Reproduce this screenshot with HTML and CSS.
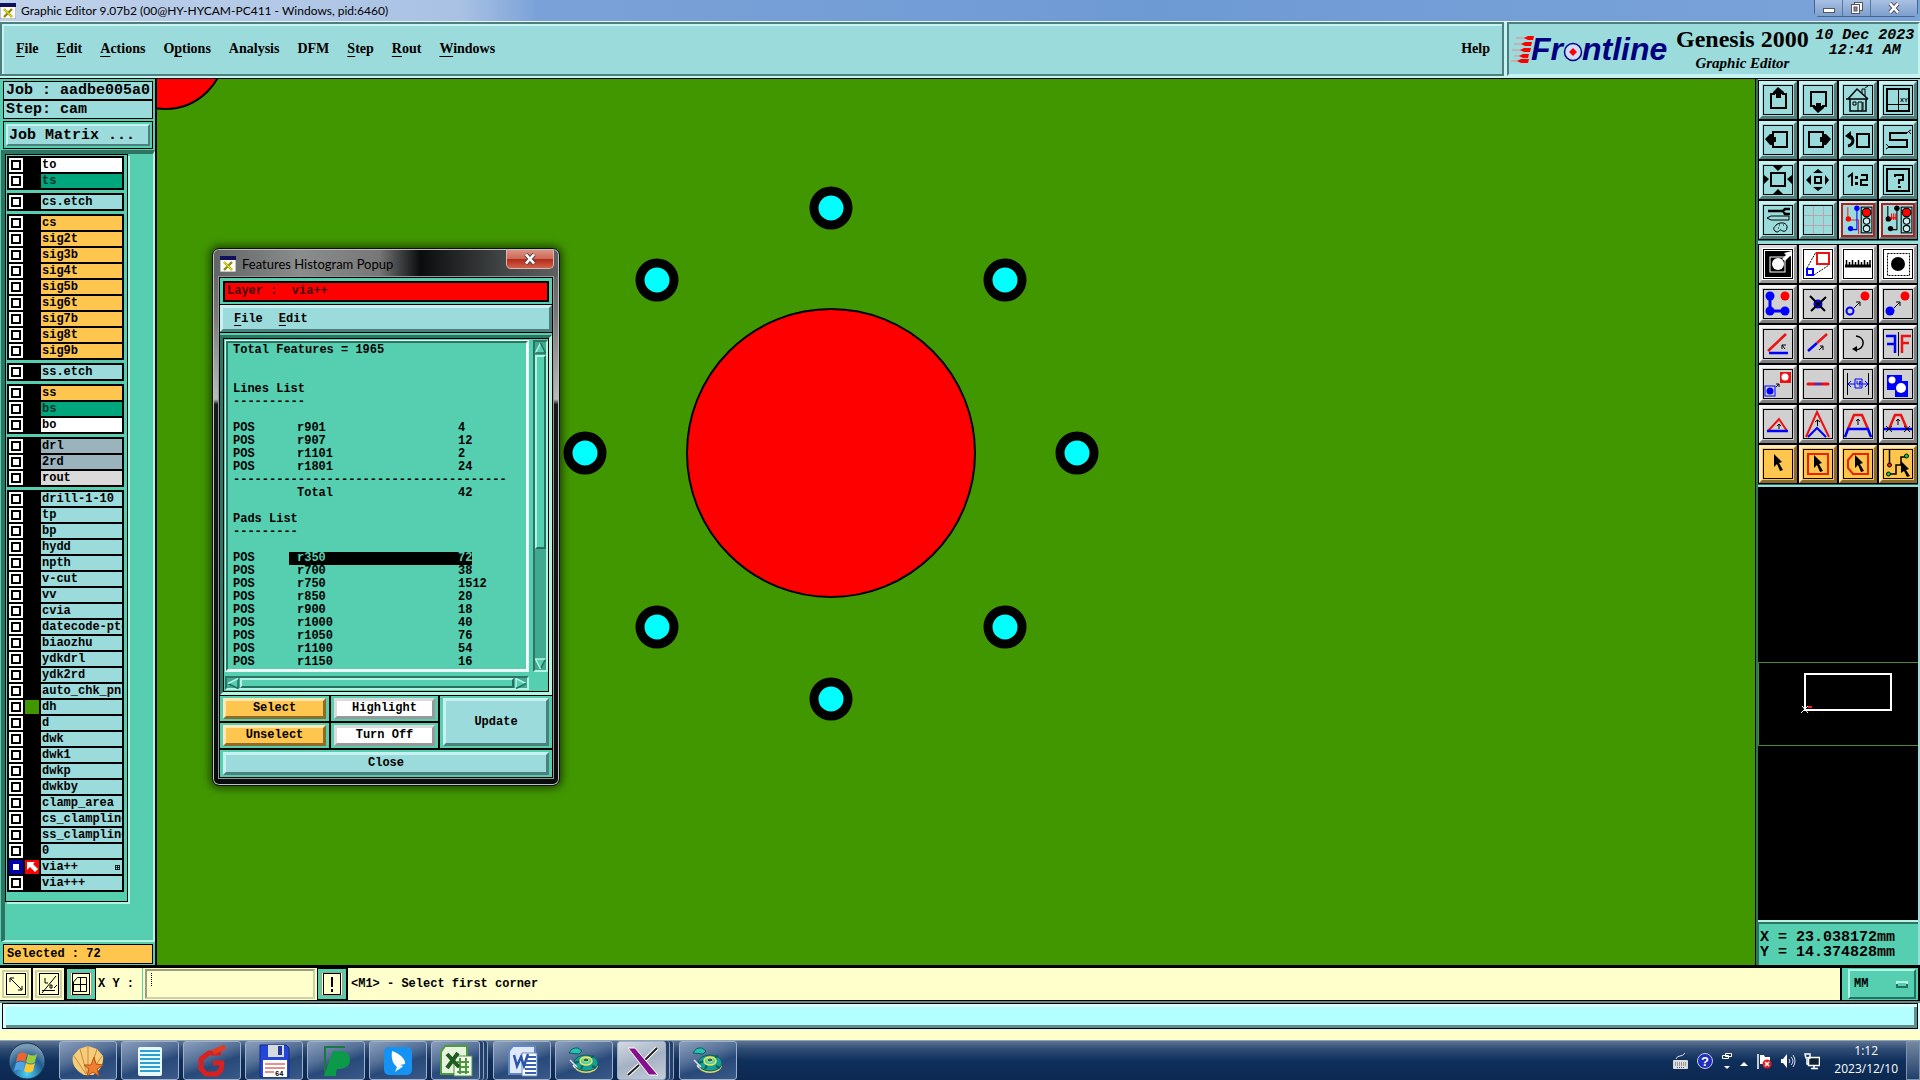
FILE: index.html
```html
<!DOCTYPE html>
<html lang="en">
<head>
  <meta charset="UTF-8" />
  <title>Graphic Editor 9.07b2</title>
  <link rel="stylesheet" href="styles.css">
</head>
<body>
  <header class="titlebar">
    <svg class="app-icon" viewBox="0 0 16 16"><rect width="16" height="16" fill="#fff" stroke="#888"/><rect width="16" height="4" fill="#10105c"/><path d="M4 6l8 8M12 6l-8 8" stroke="#8a8a10" stroke-width="2.4"/><path d="M4 6l8 8" stroke="#e8e020" stroke-width="1.2"/></svg>
    <h1>Graphic Editor 9.07b2 (00@HY-HYCAM-PC411 - Windows, pid:6460)</h1>
    <div class="window-buttons">
      <button aria-label="Minimize"><svg width="14" height="14"><rect x="1.500" y="7.500" width="11" height="4" fill="#fff" stroke="#556"/></svg></button>
      <button aria-label="Restore"><svg width="14" height="14"><rect x="4.500" y="1.500" width="8" height="8" fill="#fff" stroke="#556"/><rect x="1.500" y="3.500" width="8" height="9" fill="#fff" stroke="#556"/><rect x="4" y="6" width="3" height="4" fill="#88a" stroke="#556"/></svg></button>
      <button class="wide" aria-label="Close"><svg width="14" height="14"><path d="M3 2.500l8 9M11 2.500l-8 9" stroke="#556" stroke-width="4.500"/><path d="M3 2.500l8 9M11 2.500l-8 9" stroke="#fff" stroke-width="2.600"/></svg></button>
    </div>
  </header>

  <div class="topbar">
    <nav class="menubar">
      <a href="#"><u>F</u>ile</a>
      <a href="#"><u>E</u>dit</a>
      <a href="#"><u>A</u>ctions</a>
      <a href="#">O<u>p</u>tions</a>
      <a href="#">Analysis</a>
      <a href="#">DFM</a>
      <a href="#"><u>S</u>tep</a>
      <a href="#"><u>R</u>out</a>
      <a href="#"><u>W</u>indows</a>
      <a href="#" class="help">Help</a>
    </nav>
    <div class="brand">
      <svg class="logo" width="162" height="40" viewBox="0 -5 162 40">
        <path d="M5 4h18M3 10h17M1 16h16M3 22h14M0 27h17" stroke="#e88" stroke-width="1"/>
        <path d="M13 4l4-2h6l-1 4h-5zM10 10l4-2h7l-1 4h-6zM9 16l4-2h7l-1 4h-6zM8 22l4-2h6l-1 4h-5zM6 27l4-2h8l-1 4h-7z" fill="#f00"/>
        <text x="20" y="26" class="logo-text">Fr</text>
        <text x="71" y="26" class="logo-text">ntline</text>
        <circle cx="62" cy="18" r="8.500" fill="#cdf" stroke="#000080" stroke-width="1.500"/>
        <path d="M62 14l4 4-4 4-4-4z" fill="#f00"/>
      </svg>
      <div class="product">
        <strong>Genesis 2000</strong>
        <em>Graphic Editor</em>
      </div>
      <div class="date">10 Dec 2023<br>12:41 AM</div>
    </div>
  </div>

  <main class="workspace">
    <aside class="left-panel">
      <div class="job-box">Job : aadbe005a0</div>
      <div class="job-box">Step: cam</div>
      <div class="matrix-box"><button class="bevel">Job Matrix ...</button></div>
      <div class="layer-panel">
        <div class="layer-list">
          <div class="layer-group">
            <label class="white"><input type="checkbox"><i></i><span>to</span></label>
            <label class="mask"><input type="checkbox"><i></i><span>ts</span></label>
          </div>
          <div class="layer-group">
            <label><input type="checkbox"><i></i><span>cs.etch</span></label>
          </div>
          <div class="layer-group">
            <label class="signal"><input type="checkbox"><i></i><span>cs</span></label>
            <label class="signal"><input type="checkbox"><i></i><span>sig2t</span></label>
            <label class="signal"><input type="checkbox"><i></i><span>sig3b</span></label>
            <label class="signal"><input type="checkbox"><i></i><span>sig4t</span></label>
            <label class="signal"><input type="checkbox"><i></i><span>sig5b</span></label>
            <label class="signal"><input type="checkbox"><i></i><span>sig6t</span></label>
            <label class="signal"><input type="checkbox"><i></i><span>sig7b</span></label>
            <label class="signal"><input type="checkbox"><i></i><span>sig8t</span></label>
            <label class="signal"><input type="checkbox"><i></i><span>sig9b</span></label>
          </div>
          <div class="layer-group">
            <label><input type="checkbox"><i></i><span>ss.etch</span></label>
          </div>
          <div class="layer-group">
            <label class="signal"><input type="checkbox"><i></i><span>ss</span></label>
            <label class="mask"><input type="checkbox"><i></i><span>bs</span></label>
            <label class="white"><input type="checkbox"><i></i><span>bo</span></label>
          </div>
          <div class="layer-group">
            <label class="drill"><input type="checkbox"><i></i><span>drl</span></label>
            <label class="drill"><input type="checkbox"><i></i><span>2rd</span></label>
            <label class="rout"><input type="checkbox"><i></i><span>rout</span></label>
          </div>
          <div class="layer-group">
            <label><input type="checkbox"><i></i><span>drill-1-10</span></label>
            <label><input type="checkbox"><i></i><span>tp</span></label>
            <label><input type="checkbox"><i></i><span>bp</span></label>
            <label><input type="checkbox"><i></i><span>hydd</span></label>
            <label><input type="checkbox"><i></i><span>npth</span></label>
            <label><input type="checkbox"><i></i><span>v-cut</span></label>
            <label><input type="checkbox"><i></i><span>vv</span></label>
            <label><input type="checkbox"><i></i><span>cvia</span></label>
            <label><input type="checkbox"><i></i><span>datecode-pte</span></label>
            <label><input type="checkbox"><i></i><span>biaozhu</span></label>
            <label><input type="checkbox"><i></i><span>ydkdrl</span></label>
            <label><input type="checkbox"><i></i><span>ydk2rd</span></label>
            <label><input type="checkbox"><i></i><span>auto_chk_pnl</span></label>
            <label class="shown"><input type="checkbox"><i></i><span>dh</span></label>
            <label><input type="checkbox"><i></i><span>d</span></label>
            <label><input type="checkbox"><i></i><span>dwk</span></label>
            <label><input type="checkbox"><i></i><span>dwk1</span></label>
            <label><input type="checkbox"><i></i><span>dwkp</span></label>
            <label><input type="checkbox"><i></i><span>dwkby</span></label>
            <label><input type="checkbox"><i></i><span>clamp_area</span></label>
            <label><input type="checkbox"><i></i><span>cs_clampline</span></label>
            <label><input type="checkbox"><i></i><span>ss_clampline</span></label>
            <label><input type="checkbox"><i></i><span>0</span></label>
            <label class="work"><input type="checkbox" checked><i><svg viewBox="0 0 14 14"><path d="M2 2h8L8 4l5 5-3 3-5-5-3 3z" fill="#fff"/></svg></i><span>via++<svg class="mark" width="5" height="5"><path d="M0 .5h5M0 2.500h5M0 4.500h5M.5 0v5M2.500 0v5M4.500 0v5" stroke="#000" stroke-width=".8"/></svg></span></label>
            <label><input type="checkbox"><i></i><span>via+++</span></label>
          </div>
        </div>
      </div>
      <div class="selected-box"><div>Selected : 72</div></div>
    </aside>

    <section class="canvas">
      <svg class="board" viewBox="157 79 1598 886" preserveAspectRatio="xMinYMin slice">
        <circle cx="165" cy="49" r="60" fill="#f00" stroke="#000" stroke-width="2"/>
        <circle cx="831" cy="453" r="144" fill="#f00" stroke="#000" stroke-width="2"/>
        <g fill="#0ff" stroke="#000" stroke-width="9">
          <circle cx="831" cy="208" r="17"/>
          <circle cx="657" cy="280" r="17"/>
          <circle cx="1005" cy="280" r="17"/>
          <circle cx="585" cy="453" r="17"/>
          <circle cx="1077" cy="453" r="17"/>
          <circle cx="657" cy="627" r="17"/>
          <circle cx="1005" cy="627" r="17"/>
          <circle cx="831" cy="699" r="17"/>
        </g>
      </svg>

      <div class="popup">
        <div class="popup-title">
          <svg class="app-icon" viewBox="0 0 16 16"><rect width="16" height="16" fill="#fff" stroke="#888"/><rect width="16" height="4" fill="#10105c"/><path d="M4 6l8 8M12 6l-8 8" stroke="#8a8a10" stroke-width="2.4"/><path d="M4 6l8 8" stroke="#e8e020" stroke-width="1.2"/></svg>
          <h2>Features Histogram Popup</h2>
          <button aria-label="Close popup"><svg width="14" height="14"><path d="M3 2.500l8 9M11 2.500l-8 9" stroke="#544" stroke-width="4.500"/><path d="M3 2.500l8 9M11 2.500l-8 9" stroke="#fff" stroke-width="2.600"/></svg></button>
        </div>
        <div class="popup-body">
          <div class="popup-layer">Layer :&nbsp; via++</div>
          <nav class="popup-menu"><a href="#"><u>F</u>ile</a><a href="#"><u>E</u>dit</a></nav>
          <div class="scroll-frame">
            <div class="histogram">
              <p>Total Features = 1965</p>
              <br><br>
              <p>Lines List</p>
              <p>----------</p>
              <br>
              <table>
                <tr><td>POS</td><td>r901</td><td>4</td></tr>
                <tr><td>POS</td><td>r907</td><td>12</td></tr>
                <tr><td>POS</td><td>r1101</td><td>2</td></tr>
                <tr><td>POS</td><td>r1801</td><td>24</td></tr>
                <tr><td colspan="3">--------------------------------------</td></tr>
                <tr><td></td><td>Total</td><td>42</td></tr>
              </table>
              <br>
              <p>Pads List</p>
              <p>---------</p>
              <br>
              <table>
                <tr class="picked"><td>POS</td><td><span>r350</span></td><td><span>72</span></td></tr>
                <tr><td>POS</td><td>r700</td><td>38</td></tr>
                <tr><td>POS</td><td>r750</td><td>1512</td></tr>
                <tr><td>POS</td><td>r850</td><td>20</td></tr>
                <tr><td>POS</td><td>r900</td><td>18</td></tr>
                <tr><td>POS</td><td>r1000</td><td>40</td></tr>
                <tr><td>POS</td><td>r1050</td><td>76</td></tr>
                <tr><td>POS</td><td>r1100</td><td>54</td></tr>
                <tr><td>POS</td><td>r1150</td><td>16</td></tr>
              </table>
            </div>
            <div class="vscroll">
              <svg width="11" height="12"><path d="M5.500 1l5 10h-10z" fill="#55cfb0"/><path d="M5.500 1l-5 10" stroke="#b4f4e4" stroke-width="1.500"/><path d="M5.500 1l5 10h-10" fill="none" stroke="#24705e" stroke-width="1.500"/></svg>
              <div class="thumb"></div>
              <svg width="11" height="12"><path d="M5.500 11l5-10h-10z" fill="#55cfb0"/><path d="M5.500 11l5-10" stroke="#24705e" stroke-width="1.500"/><path d="M5.500 11l-5-10h10" fill="none" stroke="#b4f4e4" stroke-width="1.500"/></svg>
            </div>
            <div class="hscroll">
              <svg width="12" height="11"><path d="M1 5.500l10-5v10z" fill="#55cfb0"/><path d="M1 5.500l10 5v-10" fill="none" stroke="#24705e" stroke-width="1.500"/><path d="M1 5.500l10-5" stroke="#b4f4e4" stroke-width="1.500"/></svg>
              <div class="thumb"></div>
              <svg width="12" height="11"><path d="M11 5.500l-10-5v10z" fill="#55cfb0"/><path d="M11 5.500l-10-5v10" fill="none" stroke="#b4f4e4" stroke-width="1.500"/><path d="M11 5.500l-10 5" stroke="#24705e" stroke-width="1.500"/></svg>
            </div>
          </div>
          <div class="popup-actions">
            <div><button class="bevel orange">Select</button></div>
            <div><button class="bevel plain">Highlight</button></div>
            <div class="tall"><button class="bevel">Update</button></div>
            <div><button class="bevel orange">Unselect</button></div>
            <div><button class="bevel plain">Turn Off</button></div>
            <div class="full"><button class="bevel">Close</button></div>
          </div>
        </div>
      </div>
    </section>

    <aside class="right-panel">
      <div class="tools">
        <button class="bevel" aria-label="Pan up"><svg viewBox="1 1 28 28"><path d="M12 9H8v14h15V9h-4" fill="none" stroke="#000" stroke-width="2"/><path d="M15 2l6 5v2h-3v4h-5V9h-3V7z"/></svg></button>
        <button class="bevel" aria-label="Pan down"><svg viewBox="1 1 28 28"><path d="M12 21H8V7h15v14h-4" fill="none" stroke="#000" stroke-width="2"/><path d="M15 28l6-5v-2h-3v-3h-5v3h-3v2z"/></svg></button>
        <button class="bevel" aria-label="Home"><svg viewBox="1 1 28 28"><path d="M5 14L14 4l11 10M3 14h22M7 14v12h16V14" fill="none" stroke="#000" stroke-width="1.500"/><path d="M19 8V4h3v7M22 3l3-2M10 17h3v3h-3zM15 26v-9h4v9M20 17v8" fill="none" stroke="#000"/></svg></button>
        <button class="bevel" aria-label="Coordinates"><svg viewBox="1 1 28 28"><rect x="4" y="4" width="22" height="22" fill="none" stroke="#000" stroke-width="2"/><path d="M15.500 4v22M4 19.500h22" stroke="#000"/><text x="17" y="17" font-size="6" font-family="Liberation Sans">XY</text></svg></button>

        <button class="bevel" aria-label="Pan left"><svg viewBox="1 1 28 28"><path d="M10 12V7h14v15H10v-5" fill="none" stroke="#000" stroke-width="2"/><path d="M2 14l5-5h2v3h4v5H9v3H7z"/></svg></button>
        <button class="bevel" aria-label="Pan right"><svg viewBox="1 1 28 28"><path d="M20 12V7H6v15h14v-5" fill="none" stroke="#000" stroke-width="2"/><path d="M28 14l-5-5h-2v3h-4v5h4v3h2z"/></svg></button>
        <button class="bevel" aria-label="Previous view"><svg viewBox="1 1 28 28"><rect x="14" y="9" width="12" height="13" fill="none" stroke="#000" stroke-width="2"/><path d="M5 11c6-1 7 9 0 10" fill="none" stroke="#000" stroke-width="3"/><path d="M2 11l6-5v9z"/></svg></button>
        <button class="bevel" aria-label="Snake"><svg viewBox="1 1 28 28"><path d="M24 8H7v7h17v7H6" fill="none" stroke="#000" stroke-width="2"/><path d="M24 8l2-2 2-1M26 7l2 2M6 22l-3-3M6 22l-3 2" fill="none" stroke="#000"/></svg></button>

        <button class="bevel" aria-label="Zoom out"><svg viewBox="1 1 28 28"><rect x="8" y="8" width="14" height="13" fill="none" stroke="#000" stroke-width="2"/><path d="M10 1h10l-5 5zM10 29h10l-5-5zM1 10v9l5-5zM29 10v9l-5-5z"/></svg></button>
        <button class="bevel" aria-label="Zoom in"><svg viewBox="1 1 28 28"><rect x="12" y="12" width="6" height="6" fill="none" stroke="#000" stroke-width="2"/><path d="M10 8h10l-5-4zM10 22h10l-5 4zM8 10v10l-5-5zM22 10v10l4-5z"/></svg></button>
        <button class="bevel" aria-label="Scale"><svg viewBox="1 1 28 28"><path d="M5 12l4-3v12M18 10h6v5h-6v5h7" fill="none" stroke="#000" stroke-width="2"/><path d="M12 11h3v3h-3zM12 17h3v3h-3z"/></svg></button>
        <button class="bevel" aria-label="Query"><svg viewBox="1 1 28 28"><rect x="4" y="4" width="22" height="22" fill="none" stroke="#000" stroke-width="2"/><path d="M12 12v-2h8v5h-4v4M15 22h3" fill="none" stroke="#000" stroke-width="2"/></svg></button>

        <button class="bevel" aria-label="Setup"><svg viewBox="1 1 28 28"><path d="M5 6h15M27 4h-5l-2 2 2 3h5" fill="none" stroke="#000" stroke-width="2.500"/><path d="M4 13l4-2h18v4H8z" fill="none" stroke="#000"/><path d="M13 20c5-4 12-2 11 3s-5 3-6 2-3 4-6 1 0-4 1-6z" fill="none" stroke="#000"/><path d="M16 20h1M20 20h1M15 23h1" stroke="#000"/></svg></button>
        <button class="bevel" aria-label="Grid"><svg viewBox="1 1 28 28"><path d="M10.500 1v28M20.500 1v28M1 10.500h28M1 20.500h28" stroke="#b9a5ad"/></svg></button>
        <button class="bevel red" aria-label="Net check"><svg viewBox="1 1 28 28"><path d="M5.500 3v12h10v13" fill="none" stroke="#f22"/><path d="M14 5v19H8" fill="none" stroke="#00f"/><circle cx="14" cy="4" r="2.500" fill="#00f"/><circle cx="8" cy="23" r="2.500" fill="#00f"/><circle cx="6" cy="14" r="2.500" fill="#f00"/><rect x="18" y="3" width="10" height="24" fill="none" stroke="#000"/><circle cx="23" cy="8" r="4" fill="#f00" stroke="#000"/><circle cx="23" cy="16" r="3" fill="#cee" stroke="#000"/><circle cx="23" cy="23" r="3" fill="#cee" stroke="#000"/></svg></button>
        <button class="bevel red" aria-label="Spacing check"><svg viewBox="1 1 28 28"><path d="M5.500 2v12M14 5v19H8" fill="none" stroke="#000"/><circle cx="14" cy="4" r="2.500"/><circle cx="8" cy="23" r="2.500"/><circle cx="6" cy="14" r="2.500"/><path d="M7 13h6M9 9v6M11 9v6M13 9v6" stroke="#f00"/><rect x="18" y="3" width="10" height="24" fill="none" stroke="#000"/><circle cx="23" cy="8" r="4" fill="#f00" stroke="#000"/><circle cx="23" cy="16" r="3" fill="#cee" stroke="#000"/><circle cx="23" cy="23" r="3" fill="#cee" stroke="#000"/></svg></button>
      </div>

      <div class="tools edit-tools">
        <button class="bevel plain" aria-label="Negative"><svg viewBox="1 1 28 28"><rect width="30" height="30" fill="#fff"/><rect x="2" y="2" width="26" height="26"/><rect x="7" y="8" width="15" height="15" fill="#000" stroke="#fff"/><circle cx="15" cy="15" r="6" fill="#fff"/><path d="M19 10l4-4-2-2 8-2v6l-2-1-5 5z" fill="#fff"/></svg></button>
        <button class="bevel plain" aria-label="Resize"><svg viewBox="1 1 28 28"><rect x="14" y="4" width="12" height="11" fill="none" stroke="#e11" stroke-width="2"/><rect x="4" y="20" width="6" height="6" fill="none" stroke="#00f" stroke-width="2"/><path d="M4 19L13 3M11 26l15-10" stroke="#000" stroke-dasharray="2 1"/></svg></button>
        <button class="bevel plain" aria-label="Measure"><svg viewBox="1 1 28 28"><path d="M2 17h26" stroke="#000" stroke-width="3"/><path d="M3.500 11v6M6.500 13v4M9.500 11v6M12.500 13v4M15.500 11v6M18.500 13v4M21.500 11v6M24.500 13v4M27 11v6" stroke="#000" stroke-width="1.500"/></svg></button>
        <button class="bevel plain" aria-label="Reference selection"><svg viewBox="1 1 28 28"><rect x="4.500" y="4.500" width="22" height="22" fill="none" stroke="#000" stroke-dasharray="2 1"/><circle cx="15" cy="15" r="7"/></svg></button>

        <button class="bevel gray" aria-label="Add net"><svg viewBox="1 1 28 28"><path d="M7 7v15h16" fill="none" stroke="#00f" stroke-width="3"/><circle cx="7" cy="7" r="4.500" fill="#00f"/><circle cx="7" cy="22" r="4.500" fill="#00f"/><circle cx="22" cy="22" r="4.500" fill="#00f"/><circle cx="22" cy="7" r="4.500" fill="#f00"/></svg></button>
        <button class="bevel gray" aria-label="Delete"><svg viewBox="1 1 28 28"><circle cx="15" cy="15" r="4.500" fill="#00f"/><path d="M7 7l15 15M23 8L8 22" stroke="#000" stroke-width="2"/></svg></button>
        <button class="bevel gray" aria-label="Move"><svg viewBox="1 1 28 28"><circle cx="7" cy="22" r="3.500" fill="none" stroke="#00f" stroke-width="2"/><circle cx="22" cy="7" r="4.500" fill="#f00"/><path d="M11 19l6-6M13 13h4v4" fill="none" stroke="#000"/></svg></button>
        <button class="bevel gray" aria-label="Copy"><svg viewBox="1 1 28 28"><circle cx="7" cy="22" r="4.500" fill="#00f"/><circle cx="22" cy="7" r="4.500" fill="#f00"/><path d="M11 19l6-6M13 13h4v4" fill="none" stroke="#000"/></svg></button>

        <button class="bevel gray" aria-label="Change angle"><svg viewBox="1 1 28 28"><path d="M6 24h19" stroke="#00f" stroke-width="2.500"/><path d="M5 22L23 5" stroke="#e11" stroke-width="2.500"/><path d="M22 20l-3-4M19 20v-4h4" fill="none" stroke="#000"/></svg></button>
        <button class="bevel gray" aria-label="Extend line"><svg viewBox="1 1 28 28"><path d="M5 22l9-8" stroke="#00f" stroke-width="2.500"/><path d="M14 14l10-9" stroke="#e11" stroke-width="2.500"/><path d="M16 21l4-4M17 17h3v4" fill="none" stroke="#000"/></svg></button>
        <button class="bevel gray" aria-label="Rotate"><svg viewBox="1 1 28 28"><path d="M13 7c9 1 10 12 0 14" fill="none" stroke="#000" stroke-width="1.500"/><path d="M9 20l5-3v6z"/></svg></button>
        <button class="bevel gray" aria-label="Mirror"><svg viewBox="1 1 28 28"><path d="M3 7h9v17M4 15h8" fill="none" stroke="#00f" stroke-width="2.500"/><path d="M28 7h-9v17M19 14h7" fill="none" stroke="#e11" stroke-width="2.500"/><path d="M15.500 3v24" stroke="#000"/></svg></button>

        <button class="bevel gray" aria-label="Transform"><svg viewBox="1 1 28 28"><rect x="17" y="3" width="11" height="11" fill="#e11"/><circle cx="22" cy="8" r="3.500" fill="#fff"/><rect x="2" y="17" width="10" height="10" fill="none" stroke="#00f"/><circle cx="7" cy="22" r="3.500" fill="#00f"/><path d="M13 18l3-3M13 15h3v3" fill="none" stroke="#000"/></svg></button>
        <button class="bevel gray" aria-label="Break line"><svg viewBox="1 1 28 28"><path d="M5 15h20" stroke="#e11" stroke-width="3" stroke-linecap="round"/><path d="M11 15h8" stroke="#33d" stroke-width="2"/></svg></button>
        <button class="bevel gray" aria-label="Distance"><svg viewBox="1 1 28 28"><path d="M4.500 4v22M25.500 4v22" stroke="#000"/><path d="M6 15h6M18 15h6M8 12l-3 3 3 3M22 12l3 3-3 3M12 10h7v9h-7zM14 12v3h3v-3M17 12v6" fill="none" stroke="#00f"/></svg></button>
        <button class="bevel gray" aria-label="Merge"><svg viewBox="1 1 28 28"><path d="M4 6h15v6h6v16H12v-7H4z" fill="#00f"/><circle cx="9" cy="11" r="3.500" fill="#fff"/><circle cx="18" cy="19" r="5" fill="#fff"/></svg></button>

        <button class="bevel gray" aria-label="Raise corner"><svg viewBox="1 1 28 28"><path d="M5 22L16 10l8 12" fill="none" stroke="#e11" stroke-width="2"/><path d="M4 22h21" stroke="#00f" stroke-width="2.500"/><path d="M16 20v-5M14 17l2-2 2 2" fill="none" stroke="#000"/></svg></button>
        <button class="bevel gray" aria-label="Stretch corner"><svg viewBox="1 1 28 28"><path d="M3 28L14 3l12 25" fill="none" stroke="#e11" stroke-width="2"/><path d="M5 28l9-9 9 9" fill="none" stroke="#00f" stroke-width="2"/><path d="M14.500 17v-6M12 13l2.500-2 2.500 2" fill="none" stroke="#000"/></svg></button>
        <button class="bevel gray" aria-label="Stretch segment"><svg viewBox="1 1 28 28"><path d="M5 20L11 6h8l6 14" fill="none" stroke="#e11" stroke-width="2.500"/><path d="M2 28l3-8h20l3 8" fill="none" stroke="#00f" stroke-width="2.500"/><path d="M15 16v-6M13 12l2-2 2 2" fill="none" stroke="#000"/></svg></button>
        <button class="bevel gray" aria-label="Trim segment"><svg viewBox="1 1 28 28"><path d="M6 20L12 6h6l6 14" fill="none" stroke="#e11" stroke-width="2.500"/><path d="M1 20h28" stroke="#00f" stroke-width="2.500"/><path d="M15 16v-6M13 12l2-2 2 2M3 17l6 6M9 17l-6 6M21 17l6 6M27 17l-6 6" fill="none" stroke="#000"/></svg></button>

        <button class="bevel orange" aria-label="Select"><svg viewBox="1 1 28 28"><path d="M11 5l8 8-3 1 4 7-3 1-3-7-3 3z"/></svg></button>
        <button class="bevel orange" aria-label="Select in frame"><svg viewBox="1 1 28 28"><rect x="5" y="5" width="20" height="20" fill="none" stroke="#e20" stroke-width="2"/><path d="M11 6l8 8-3 1 4 7-3 1-3-7-3 3z"/></svg></button>
        <button class="bevel orange" aria-label="Select in polygon"><svg viewBox="1 1 28 28"><path d="M10 5h15v20H10l-5-6V11z" fill="none" stroke="#e20" stroke-width="2"/><path d="M12 6l8 8-3 1 4 7-3 1-3-7-3 3z"/></svg></button>
        <button class="bevel orange" aria-label="Select net"><svg viewBox="1 1 28 28"><path d="M6.500 1v14M6 25h7v-9h5V8h4" fill="none" stroke="#000" stroke-width="1.500"/><circle cx="6.500" cy="16" r="2" fill="#e20" stroke="#000"/><circle cx="5.500" cy="25" r="2" fill="#1d2" stroke="#000"/><circle cx="23.500" cy="7" r="2" fill="#1d2" stroke="#000"/><path d="M18 12l8 8-3 1 4 6-3 1-3-6-3 2z"/></svg></button>
      </div>

      <div class="overview">
        <svg viewBox="0 0 160 84">
          <path d="M160 .5H.5v83H160" fill="none" stroke="#4f8a22"/>
          <rect x="47" y="12" width="86" height="36" fill="none" stroke="#fff" stroke-width="2"/>
          <path d="M44 44l6 7M50 44l-7 7" stroke="#fff"/>
          <path d="M50 45h4" stroke="#e22" stroke-width="2"/>
        </svg>
      </div>
      <div class="coords">X = 23.038172mm<br>Y = 14.374828mm</div>
    </aside>
  </main>

  <div class="command-bar">
    <button class="cmd" aria-label="Resize view"><svg width="20" height="22"><rect x=".5" y=".5" width="19" height="21" fill="none" stroke="#000"/><path d="M4 9V5h4M4 5l12 12M16 13v4h-4" fill="none" stroke="#000"/></svg></button>
    <button class="cmd" aria-label="Absolute or relative"><svg width="20" height="22"><rect x=".5" y=".5" width="19" height="21" fill="none" stroke="#000"/><path d="M3 20L17 3M3 17.500h13M6 5v5h3M11 12h2v3h-2zM15 15l3-3" fill="none" stroke="#000"/></svg></button>
    <button class="cmd teal" aria-label="Snap"><svg width="18" height="22"><path d="M5.500 4.500h9v14h-13V9zM1 11.500h14M8.500 4v14" fill="none" stroke="#000"/><rect x=".5" y=".5" width="17" height="21" fill="none" stroke="#000"/></svg></button>
    <label class="xy" for="xy">X Y :</label>
    <div class="xy-box"><input id="xy" type="text"></div>
    <button class="cmd teal" aria-label="Help on command"><svg width="18" height="22"><rect x=".5" y=".5" width="17" height="21" fill="none" stroke="#000"/><path d="M9 4v10M9 16v3" stroke="#000" stroke-width="2"/></svg></button>
    <div class="message">&lt;M1&gt; - Select first corner</div>
    <div class="unit-box">
      <select class="unit" aria-label="Units"><option>MM</option></select>
    </div>
  </div>
  <div class="status"><div></div></div>

  <footer class="taskbar">
    <button class="start" aria-label="Start">
      <svg width="38" height="38" viewBox="0 0 38 38"><defs><radialGradient id="orb" cx="50%" cy="85%" r="75%"><stop offset="0" stop-color="#4ad4f8"/><stop offset=".6" stop-color="#205c90"/><stop offset="1" stop-color="#7a9ab4"/></radialGradient></defs><circle cx="19" cy="19" r="18" fill="url(#orb)" stroke="#1a3450"/><path d="M10 12q5-3 9 0l-2 8q-5-3-9 0z" fill="#ee6330"/><path d="M20 12q5 3 9 0l-2 8q-4 3-9 0z" fill="#9acb3c"/><path d="M8 21q4-3 9 0l-2 8q-4-3-9 0z" fill="#51a4e4"/><path d="M18 21q5 3 9 0l-2 8q-5 3-9 0z" fill="#fdc92e"/></svg>
    </button>
    <button class="task" aria-label="Shell"><svg width="34" height="34" viewBox="0 0 34 34"><path d="M13 31C5 27 0 20 2 12L8 5l9-3 9 3 6 7c1 8-3 15-10 19z" fill="#f5cc7a"/><path d="M15 30L3 12M16 30L9 5M17 30V2M18 30l8-25M19 30l12-18" stroke="#c98a35"/><path d="M23 13l2 7 7 1-6 4 2 7-6-4-6 4 2-7-5-4h7z" fill="#f08030" stroke="#b85018"/></svg></button>
    <button class="task" aria-label="Notes"><svg width="34" height="34" viewBox="0 0 34 34"><rect x="5" y="3" width="24" height="29" rx="2" fill="#e8f7fc"/><path d="M7 7h20M7 11h20M7 15h20M7 19h20M7 23h20M7 27h20" stroke="#2a9fd0" stroke-width="2"/></svg></button>
    <button class="task" aria-label="G"><svg width="34" height="34" viewBox="0 0 34 34"><path d="M26 9H14L6 15v10l5 5h11l4-4 1-7h-9" fill="none" stroke="#d82020" stroke-width="5" stroke-linejoin="round"/><path d="M18 8l12-5" stroke="#e33a20" stroke-width="5"/></svg></button>
    <button class="task" aria-label="Save"><svg width="34" height="34" viewBox="0 0 34 34"><path d="M3 1h26l3 3v29H3z" fill="#2446d8" stroke="#122a88"/><rect x="11" y="1" width="16" height="12" fill="#d5dadf"/><rect x="21" y="2" width="4" height="9" fill="#233a9c"/><rect x="6" y="16" width="24" height="17" fill="#fff"/><path d="M8 20h20M8 24h20M8 28h9" stroke="#c22"/><text x="18" y="32" font-size="7" font-family="Liberation Mono" font-weight="bold">64</text></svg></button>
    <button class="task" aria-label="P"><svg width="34" height="34" viewBox="0 0 34 34"><path d="M6 30V3h20" fill="none" stroke="#187a40" stroke-width="2"/><path d="M14 7h8q9 1 9 9t-10 9h-3l-2 7H5z" fill="#0a9a48"/><path d="M9 30h8" stroke="#0a9a48" stroke-width="4"/></svg></button>
    <button class="task" aria-label="Wing"><svg width="34" height="34" viewBox="0 0 34 34"><rect x="3" y="3" width="28" height="28" rx="5" fill="#1593f5"/><path d="M11 7c9 3 14 9 13 13l-5 1 3 1c-2 3-5 3-8 6l2-5c-4-3-6-8-5-16z" fill="#fff"/></svg></button>
    <button class="task stack" aria-label="Excel"><svg width="34" height="34" viewBox="0 0 34 34"><path d="M6 2h22v28H2V8z" fill="#e7f3df" stroke="#4c9b3a" stroke-width="2"/><path d="M15 12h18v20H15z" fill="#f4faf1" stroke="#50903e"/><path d="M18 18h12M18 23h12M18 28h12M21 14v16M27 14v16" stroke="#4c9b3a" stroke-width="2"/><path d="M8 10l12 13M19 9L8 24" stroke="#205c20" stroke-width="4"/></svg></button>
    <button class="task" aria-label="Word"><svg width="34" height="34" viewBox="0 0 34 34"><path d="M8 2h22v28H4V7z" fill="#dfe9f7" stroke="#5f88c8" stroke-width="2"/><path d="M17 9h15v23H17z" fill="#fff" stroke="#5f88c8"/><path d="M23 13h8M22 17h9M20 21h11M20 25h11M20 29h11" stroke="#3563b0" stroke-width="2"/><path d="M9 11l3 11 4-9 3 9 4-12" fill="none" stroke="#2a55a8" stroke-width="2.500"/></svg></button>
    <button class="task" aria-label="Engineering toolkit"><svg width="34" height="34" viewBox="0 0 34 34"><use href="#disc"/></svg></button>
    <button class="task stack active" aria-label="X server"><svg width="34" height="34" viewBox="0 0 34 34"><path d="M32 4L20 16M14 21L3 31" stroke="#fff" stroke-width="4"/><path d="M32 4L20 16M14 21L3 31" stroke="#222" stroke-width="2"/><path d="M3 4h7l23 27h-9z" fill="#84108c" stroke="#fff"/></svg></button>
    <button class="task" aria-label="Engineering toolkit 2"><svg width="34" height="34" viewBox="0 0 34 34"><g id="disc"><ellipse cx="19" cy="21" rx="12" ry="8" fill="#e6d860"/><ellipse cx="19" cy="19" rx="12" ry="8" fill="#159e98" stroke="#0b5e60"/><path d="M8 19l5-2M25 22l4 2M14 25l2-4M24 13l3-1" stroke="#0b5e60" stroke-width="2"/><ellipse cx="19" cy="17" rx="6" ry="4" fill="#42d0c0" stroke="#f2e54c" stroke-width="1.500"/><ellipse cx="19" cy="16" rx="3" ry="2" fill="#0a6a78" stroke="#f2e54c"/><path d="M2 9q3-6 9-5l4 3-3 3z" fill="#25c2b2" stroke="#0b5e60"/><path d="M3 16l7 7M6 21l2 3" stroke="#dde" stroke-width="1.500"/></g></svg></button>

    <div class="tray">
      <svg width="16" height="18"><rect x="1" y="8" width="15" height="9" rx="1" fill="#ddd"/><path d="M3 11h11M3 13h11M5 15.500h7" stroke="#555" stroke-dasharray="1 1"/><path d="M4 7q1-3 4-3t5-3" fill="none" stroke="#ddd"/></svg>
      <svg width="18" height="18"><circle cx="9" cy="9" r="7.500" fill="#1c2fc0" stroke="#ccd"/><text x="9" y="14" text-anchor="middle" font-size="13" font-weight="bold" font-family="Liberation Sans" fill="#fff">?</text></svg>
      <svg width="10" height="18"><path d="M3.500 1.500h6v3h-6zM.5 3.500h6v3h-6z" fill="#234" stroke="#fff"/><path d="M2 14h6l-3 3z" fill="#fff"/></svg>
      <svg width="8" height="18"><path d="M0 14h8l-4-4z" fill="#fff"/></svg>
      <svg width="16" height="18"><path d="M2 2v15" stroke="#fff" stroke-width="1.500"/><path d="M4 3h4l1 2h5v7H4z" fill="#fff"/><circle cx="11" cy="12" r="4.500" fill="#e02020"/><path d="M9 10l4 4M13 10l-4 4" stroke="#fff" stroke-width="1.500"/></svg>
      <svg width="16" height="18"><path d="M1 7h2l4-5v14l-4-5H1z" fill="#fff"/><path d="M9 7q2 2 0 4M11 5q4 4 0 8M13 3q4 6 0 12" fill="none" stroke="#dde"/></svg>
      <svg width="16" height="18"><rect x="4.500" y="5.500" width="11" height="8" fill="#123" stroke="#fff" stroke-width="1.500"/><path d="M7 16.500h7M10 13v3M1 2h5v4H2zM3 7v5h2" fill="none" stroke="#fff" stroke-width="1.500"/></svg>
    </div>
    <div class="clock">1:12<br>2023/12/10</div>
    <button class="show-desktop" aria-label="Show desktop"></button>
  </footer>
</body>
</html>
```
FILE: styles.css
```css
* {
  box-sizing: border-box;
}
body {
  margin: 0;
  height: 100vh;
  display: flex;
  flex-direction: column;
  overflow: hidden;
  background: #ffffcc;
  color: #000;
  font-family: "Liberation Mono", monospace;
  font-size: 12px;
  font-weight: bold;
}
button, select, input {
  font: inherit;
  color: inherit;
  margin: 0;
  padding: 0;
  border-radius: 0;
}
a {
  color: inherit;
  text-decoration: none;
}
u {
  text-underline-offset: 3px;
}
svg {
  display: block;
}
.bevel {
  display: block;
  width: 100%;
  border: 3px solid;
  border-color: #c6f2f2 #4d7f7f #4d7f7f #c6f2f2;
  background: #9bdbdb;
}
.orange {
  background: #ffc64f;
  border-color: #ffe8b4 #8c6c28 #8c6c28 #ffe8b4;
}
.plain {
  background: #fff;
  border-color: #dcdcdc #999 #999 #dcdcdc;
}
.gray {
  background: #d0d0d0;
  border-color: #f4f4f4 #808080 #808080 #f4f4f4;
}

/* window title */
.titlebar {
  flex: none;
  height: 22px;
  display: flex;
  align-items: center;
  gap: 5px;
  background: linear-gradient(90deg, #c0d2ea 0, #a9c2e4 24%, #7ba2d8 28%, #6e9ad4 60%, #7aa3d9 100%);
  border-bottom: 1px solid #e8f4f8;
}
.app-icon {
  width: 16px;
  height: 16px;
}
.titlebar h1 {
  margin: 0;
  font: 12px Lato, sans-serif;
}
.window-buttons {
  margin: 0 2px 4px auto;
  display: flex;
  align-self: flex-start;
  border: 1px solid #47648f;
  border-top: 0;
  border-radius: 0 0 5px 5px;
}
.window-buttons button {
  width: 28px;
  height: 16px;
  display: grid;
  place-items: center;
  border: 0;
  border-right: 1px solid #5877a3;
  background: linear-gradient(#a9c1e2, #7d9fcd);
}
.window-buttons .wide {
  width: 46px;
  border: 0;
}

/* menu and product name */
.topbar {
  flex: none;
  height: 57px;
  display: flex;
  border-bottom: 1px solid #000;
  background: #c6f2f2;
  font: bold 14px "Liberation Serif", serif;
}
.menubar, .brand {
  display: flex;
  align-items: center;
  margin-bottom: 2px;
  border-style: solid;
  border-width: 2px;
  background: #9bdbdb;
}
.menubar {
  flex: 1;
  gap: 18px;
  padding: 0 12px 0 14px;
  border-color: #4d7f7f;
  box-shadow: inset 2px 2px #c6f2f2;
}
.help {
  margin-left: auto;
}
.brand {
  margin-left: 3px;
  width: 413px;
  gap: 3px;
  padding-left: 2px;
  border-color: #4d7f7f #c6f2f2 #c6f2f2 #4d7f7f;
}
.logo {
  flex: none;
}
.logo-text {
  font: italic bold 32px "Liberation Sans", sans-serif;
  fill: #000080;
}
.product {
  text-align: center;
  white-space: nowrap;
}
.product strong {
  display: block;
  font-size: 24px;
  line-height: 28px;
}
.product em {
  font-size: 15px;
  line-height: 20px;
}
.date {
  align-self: flex-start;
  flex: 1;
  margin-top: 4px;
  text-align: center;
  white-space: nowrap;
  font: italic bold 15px/15px "Liberation Mono", monospace;
}

/* work area */
.workspace {
  flex: 1;
  min-height: 0;
  display: flex;
}
.left-panel {
  flex: none;
  width: 157px;
  display: flex;
  flex-direction: column;
  padding: 2px 0 0 1px;
  background: #55cfb0;
  border-right: 2px solid #000;
  border-bottom: 1px solid #000;
}
.job-box {
  margin: 0 2px;
  padding-left: 2px;
  height: 19px;
  border: 1px solid #000;
  background: #9bdbdb;
  font-size: 15px;
  line-height: 17px;
  white-space: nowrap;
}
.matrix-box {
  margin: 2px 2px 1px;
  padding: 2px;
  border: 1px solid #000;
  font-size: 15px;
}
.matrix-box button {
  height: 22px;
  padding-left: 1px;
  border-width: 2px;
  line-height: 17px;
  text-align: left;
}
.layer-panel {
  flex: 1;
  min-height: 0;
  border: solid;
  border-width: 4px 2px 2px 4px;
  border-color: #2e7463 #b4f4e4 #b4f4e4 #2e7463;
}
.layer-list {
  width: 123px;
  padding: 1px 1px 9px;
  border: 1px solid #000;
  box-shadow: 2px 2px #b4f4e4;
  display: flex;
  flex-direction: column;
  gap: 3px;
}
.layer-group {
  display: grid;
  gap: 2px;
  padding: 2px;
  width: 117px;
  background: #000;
}
.layer-group label {
  display: grid;
  grid-template-columns: 14px 14px 1fr;
  gap: 2px;
  height: 14px;
}
.layer-group input {
  appearance: none;
  width: 14px;
  height: 14px;
  border: 2px solid #fff;
  outline: 2px solid #000;
  outline-offset: -4px;
  background: #fff;
}
.layer-group span {
  position: relative;
  overflow: hidden;
  padding-left: 1px;
  line-height: 14px;
  white-space: nowrap;
  background: #9bdbdb;
}
.layer-group .white span { background: #fff; }
.layer-group .mask span { background: #00a67c; color: #043428; }
.layer-group .signal span { background: #ffc64f; }
.layer-group .drill span { background: #9bb3bd; }
.layer-group .rout span { background: #dadada; }
.layer-group .shown i { background: #419700; }
.layer-group .work i { background: #f00; }
.layer-group input:checked {
  border-color: #0000a8;
  outline-color: #0000a8;
}
.mark {
  position: absolute;
  right: 2px;
  top: 5px;
}
.selected-box {
  padding: 2px 2px 1px;
}
.selected-box div {
  height: 20px;
  padding-left: 3px;
  border: 1px solid #000;
  background: #ffc64f;
  line-height: 18px;
}
.canvas {
  flex: 1;
  min-width: 0;
  position: relative;
  background: #419700;
  border-bottom: 1px solid #000;
}
.board {
  width: 100%;
  height: 100%;
}

/* histogram window, floats over the board */
.popup {
  position: absolute;
  left: 55px;
  top: 169px;
  width: 348px;
  padding: 0 6px 7px;
  border: 1px solid #111;
  border-radius: 7px;
  background: linear-gradient(#5a5c5c 0, #777 12%, #bbb 28%, #161a1a 29%, #080c0c 100%);
  box-shadow: inset 0 0 0 1px #b8c4c0, 0 0 9px 2px rgba(0,0,0,0.6);
}
.popup-title {
  display: flex;
  align-items: center;
  gap: 6px;
  height: 27px;
  margin: 1px -5px 0;
  padding-left: 6px;
  border-radius: 6px 6px 0 0;
  background: linear-gradient(90deg, #626565 0, #8b8d8d 25%, #777 48%, #0a0c0e 60%, #454848 85%, #5d6060 100%);
}
.popup-title h2 {
  margin: 0;
  font: 13px Lato, sans-serif;
}
.popup-title button {
  margin: 0 4px 0 auto;
  align-self: flex-start;
  display: grid;
  place-items: center;
  width: 48px;
  height: 19px;
  border: 1px solid #ddb4ac;
  border-top: 0;
  border-radius: 0 0 5px 5px;
  background: linear-gradient(#dc9484 0, #cd6856 48%, #b02a18 50%, #d0604a 100%);
}
.popup-body {
  border: 1px solid #000;
  outline: 1px solid #8f9b98;
  background: #55cfb0;
}
.popup-layer {
  margin: 3px;
  height: 21px;
  padding-left: 2px;
  border: 2px solid #000;
  background: #f00;
  color: #400;
  line-height: 17px;
}
.popup-menu {
  display: flex;
  gap: 16px;
  align-items: center;
  height: 27px;
  padding-left: 11px;
  background: #9bdbdb;
  border: solid;
  border-width: 3px;
  border-color: #c6f2f2 #4d7f7f #4d7f7f #c6f2f2;
  outline: 1px solid #000;
}
.scroll-frame {
  display: grid;
  grid-template-columns: 1fr 15px;
  grid-template-rows: 332px 14px;
  gap: 4px;
  margin-top: 3px;
  padding: 2px 1px 2px 2px;
  border: solid;
  border-width: 3px;
  border-color: #2e7463 #b4f4e4 #b4f4e4 #2e7463;
  box-shadow: inset 0 0 0 1px #000;
}
.histogram {
  overflow: hidden;
  padding: 1px 0 0 5px;
  border: solid;
  border-width: 3px;
  border-color: #2e7463 #fff #fff #2e7463;
  outline: 1px solid #d8fff4;
  outline-offset: -1px;
  line-height: 13px;
  white-space: nowrap;
}
.histogram p {
  margin: 0;
}
.histogram table {
  table-layout: fixed;
  width: 285px;
  border-collapse: collapse;
}
.histogram td {
  padding: 0;
  width: 60px;
  height: 13px;
}
.histogram td:nth-child(1) { width: 56px; }
.histogram td:nth-child(2) { width: 169px; padding-left: 8px; }
.picked td:nth-child(2) {
  background: #000;
  color: #55cfb0;
}
.picked td:nth-child(3) span {
  display: inline-block;
  background: #000;
  color: #55cfb0;
}
.vscroll, .hscroll {
  display: flex;
  align-items: center;
  gap: 1px;
  border: 2px solid;
  border-color: #2e7463 #b4f4e4 #b4f4e4 #2e7463;
  background: #41a990;
}
.vscroll {
  flex-direction: column;
}
.thumb {
  background: #55cfb0;
  border: 2px solid;
  border-color: #b4f4e4 #24705e #24705e #b4f4e4;
}
.vscroll .thumb {
  width: 100%;
  height: 59%;
  margin-bottom: auto;
}
.hscroll .thumb {
  flex: 1;
  height: 100%;
}
.popup-actions {
  display: grid;
  grid-template-columns: 109px 107px 1fr;
  gap: 2px;
  padding-top: 1px;
  background: #000;
}
.popup-actions div {
  padding: 2px 3px;
  background: #55cfb0;
}
.popup-actions button {
  height: 21px;
  line-height: 15px;
}
.popup-actions .tall {
  grid-row: span 2;
  grid-column: 3;
}
.popup-actions .tall button {
  height: 48px;
}
.popup-actions .full {
  grid-column: span 3;
}
.popup-actions .full button {
  height: 23px;
}

/* tools */
.right-panel {
  flex: none;
  width: 165px;
  display: flex;
  flex-direction: column;
  padding: 1px 2px 0 1px;
  border-left: 1px solid #000;
  border-bottom: 1px solid #000;
  background: #9bdbdb;
  box-shadow: inset 2px 0 #2e7463;
}
.tools {
  display: grid;
  grid-template-columns: repeat(4, 38px);
  gap: 2px;
  padding: 1px;
  margin-left: 1px;
  background: #000;
  border-bottom: 1px solid #2e7463;
}
.edit-tools {
  margin-top: 3px;
  margin-bottom: 2px;
}
.tools button {
  width: 38px;
  height: 38px;
  display: grid;
  place-items: center;
}
.tools svg {
  width: 30px;
  height: 30px;
  border: 1px solid #000;
}
.tools .red svg {
  border: 0;
  outline: 2px solid #b81c1c;
}
.overview {
  flex: 1;
  min-height: 0;
  margin-left: 1px;
  display: grid;
  align-items: center;
  background: #000;
  border-bottom: 2px solid #b4f4e4;
}
.overview svg {
  width: 100%;
}
.coords {
  height: 43px;
  padding: 6px 0 0 1px;
  background: #55cfb0;
  border: solid #2e7463;
  border-width: 2px 0 0 2px;
  font-size: 15px;
  line-height: 15px;
}

/* command line */
.command-bar {
  flex: none;
  height: 35px;
  display: flex;
  border-top: 2px solid #000;
  border-bottom: 1px solid #000;
  background: #ffffcc;
}
.cmd {
  flex: none;
  width: 33px;
  display: grid;
  place-items: center;
  border: 0;
  border-right: 2px solid #000;
  background: #ffffcc;
  box-shadow: inset 0 0 0 2px #ffffcc, inset 0 0 0 4px #cfcfa4;
}
.cmd.teal {
  width: 30px;
  border: 1px solid #000;
  box-shadow: inset 0 0 0 3px #55cfb0, inset 0 0 0 4px #a4a484;
}
.xy {
  width: 47px;
  padding-left: 2px;
  line-height: 32px;
  white-space: nowrap;
  border-right: 1px solid #55cfb0;
}
.xy-box {
  width: 174px;
  padding: 1px 2px;
}
.xy-box input {
  width: 100%;
  height: 100%;
  padding-left: 4px;
  border: 2px solid;
  border-color: #9c9c7c #d0d0a8 #d0d0a8 #9c9c7c;
  background: repeating-linear-gradient(#000 0 1px, #ffffcc 1px 2px) 4px 2px / 1px 14px no-repeat, #ffffcc;
}
.message {
  flex: 1;
  padding-left: 3px;
  border-left: 1px solid #000;
  line-height: 32px;
}
.unit-box {
  width: 80px;
  padding: 1px 2px 1px 6px;
  border-left: 2px solid #000;
  border-right: 2px solid #000;
  background: #55cfb0;
}
.unit {
  appearance: none;
  width: 100%;
  height: 100%;
  padding-left: 4px;
  border: 2px solid;
  border-color: #b4f4e4 #24705e #24705e #b4f4e4;
  background: linear-gradient(#55cfb0, #55cfb0) right 8px center / 8px 3px no-repeat, linear-gradient(#b4f4e4 50%, #24705e 50%) right 6px center / 12px 7px no-repeat, #55cfb0;
}
.status {
  flex: none;
  height: 29px;
  margin-bottom: 10px;
  padding: 0 2px 1px;
  background: #d8ffff;
  border-top: 2px solid #648c8c;
}
.status div {
  height: 26px;
  border: 1px solid #000;
  background: #b3ffff;
  box-shadow: inset 3px 3px #d8ffff, inset -3px -3px #648c8c;
}

/* taskbar */
.taskbar {
  flex: none;
  height: 40px;
  display: flex;
  padding-left: 8px;
  border-top: 1px solid #90a4bc;
  background: linear-gradient(#5f7494 0, #304d74 20%, #0f2f5c 50%, #0c2850 100%);
}
.start {
  width: 38px;
  margin-right: 13px;
  border: 0;
  background: none;
}
.task {
  width: 58px;
  margin-right: 4px;
  display: grid;
  place-items: center;
  border: 1px solid #a0b0c8;
  border-radius: 3px;
  background: linear-gradient(160deg, #8b9fbc 0, #546f96 40%, #284a7a 60%, #3a5a88 100%);
}
.task.stack {
  width: 49px;
  margin-right: 13px;
  box-shadow: 3px 0 #23406c, 4px 0 #90a4bc, 7px 0 #23406c, 8px 0 #90a4bc;
}
.task.active {
  background: linear-gradient(160deg, #d3dae2 0, #a4b2c4 50%, #c4ced8 100%);
}
.tray {
  margin-left: auto;
  display: flex;
  align-items: center;
  gap: 8px;
}
.clock {
  margin: 1px 8px 0 14px;
  color: #fff;
  text-align: center;
  font: 12px/18px "Open Sans", sans-serif;
}
.show-desktop {
  width: 14px;
  border: 1px solid #8093ad;
  background: linear-gradient(#7487a0, #20406c);
}
```
